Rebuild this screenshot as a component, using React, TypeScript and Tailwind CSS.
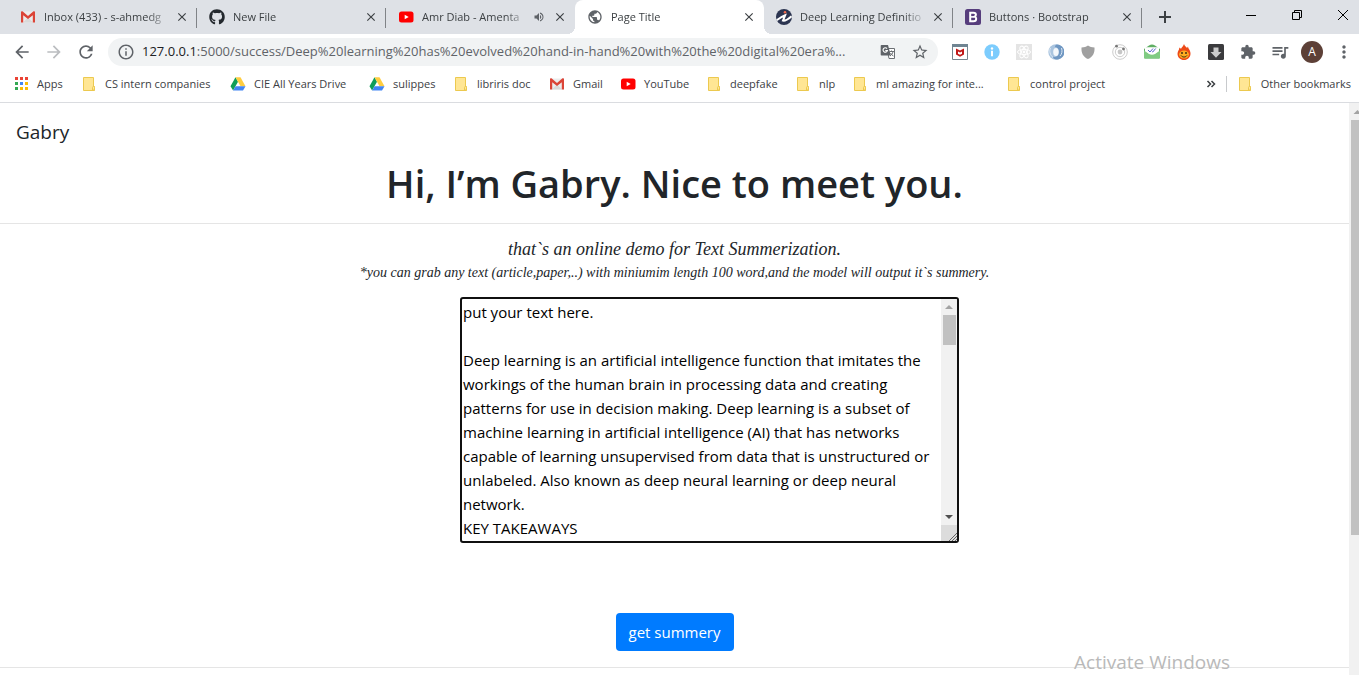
import type { ReactNode } from "react";
import {
  MdArrowBack,
  MdArrowForward,
  MdClose,
  MdExtension,
  MdInfoOutline,
  MdMoreVert,
  MdPublic,
  MdQueueMusic,
  MdRefresh,
  MdStarBorder,
  MdVolumeUp,
} from "react-icons/md";
import { FaGithub } from "react-icons/fa";

function GmailIcon() {
  return (
    <svg viewBox="0 0 16 16" className="size-4 shrink-0" aria-hidden="true">
      <path d="M1.500 2.500h13v11h-13z" fill="#ececec" />
      <path d="M3 13.500l5-5 5 5z" fill="#d9d9d9" />
      <path d="M1 3.200v10.300h2.200V6.200L8 10l4.800-3.800v7.300H15V3.200c0-.8-1-1.200-1.800-.6L8 6.900 2.800 2.600C2 2 1 2.400 1 3.200z" fill="#db4437" />
    </svg>
  );
}

function YouTubeIcon() {
  return (
    <svg viewBox="0 0 16 16" className="size-4 shrink-0" aria-hidden="true">
      <rect x="1" y="2.500" width="14.500" height="11" rx="2.500" fill="#f00" />
      <path d="M6.700 5.700v4.600l4-2.300z" fill="#fff" />
    </svg>
  );
}

function DriveIcon() {
  return (
    <svg viewBox="0 0 16 16" className="size-4 shrink-0" aria-hidden="true">
      <path d="M5.500 1.200L.5 10.200l2.600 4.400L8 5.800z" fill="#0f9d58" />
      <path d="M5.500 1.200h5l5 9h-5z" fill="#ffcd40" />
      <path d="M5.600 10.200h9.900L13 14.600H3.100z" fill="#4285f4" />
    </svg>
  );
}

function FolderIcon() {
  return (
    <svg viewBox="0 0 16 16" className="size-4 shrink-0" aria-hidden="true">
      <path d="M2.500 1.500h10v9h1v4h-11z" fill="#ffe694" stroke="#ecc94f" />
      <path d="M11.500 14v-2.500a1 1 0 0 1 2 0V14z" fill="#ffe694" stroke="#ecc94f" />
    </svg>
  );
}

function AppsIcon() {
  const colors = ["#ea4335", "#ea4335", "#ea4335", "#34a853", "#4285f4", "#fbbc05", "#34a853", "#fbbc05", "#fbbc05"];
  return (
    <svg viewBox="0 0 16 16" className="size-4 shrink-0" aria-hidden="true">
      {colors.map((c, i) => (
        <rect key={i} x={2 + (i % 3) * 5} y={1 + Math.floor(i / 3) * 5} width="3" height="3" fill={c} />
      ))}
    </svg>
  );
}

function InvestopediaIcon() {
  return (
    <svg viewBox="0 0 16 16" className="size-4 shrink-0" aria-hidden="true">
      <circle cx="8" cy="8" r="8" fill="#2c3551" />
      <path
        d="M.8 11.200C4 8.800 6 7.200 9.200 6.200L7 11.600c2 .4 4.500-.8 8.600-4.400"
        fill="none"
        stroke="#fff"
        strokeWidth="2"
      />
      <circle cx="9" cy="3.200" r="1.300" fill="#f26b4e" />
    </svg>
  );
}

function BootstrapIcon() {
  return (
    <svg viewBox="0 0 16 16" className="size-4 shrink-0" aria-hidden="true">
      <rect width="16" height="16" rx="2.500" fill="#563d7c" />
      <path
        d="M5.200 3.800h3.300c1.500 0 2.400.6 2.400 1.900 0 .9-.5 1.500-1.200 1.900.9.300 1.500 1 1.500 2.100 0 1.700-1.200 2.500-2.800 2.500H5.200z"
        fill="none"
        stroke="#fff"
        strokeWidth="2"
      />
      <path d="M5 7.900h4.500" stroke="#fff" strokeWidth="1.600" />
    </svg>
  );
}

function TranslateIcon() {
  return (
    <svg viewBox="0 0 16 16" className="size-4" aria-hidden="true">
      <path d="M7 4.500h7.500v10H9z" fill="#fff" stroke="#6b6f73" />
      <path d="M9.500 7.500h4.500M11.500 6.500v1M13 7.500c-.3 2-1.500 3.500-3 4.500M10.500 9c.7 1.500 2 2.500 3 3" fill="none" stroke="#6b6f73" />
      <path d="M1.500 1H8l2.800 10.500H1.500a.8.800 0 0 1-.8-.8V1.800A.8.800 0 0 1 1.500 1z" fill="#5f6368" />
      <path d="M7 4.600a2.200 2.200 0 1 0 .4 1.900H5.300" fill="none" stroke="#fff" strokeWidth="1.100" />
    </svg>
  );
}

type Tab = { title: string; icon: ReactNode; active?: boolean; audio?: boolean; divider?: boolean };

const tabs: Tab[] = [
  { title: "Inbox (433) - s-ahmedg", icon: <GmailIcon />, divider: true },
  { title: "New File", icon: <FaGithub className="size-4 shrink-0 text-[#24292e]" />, divider: true },
  { title: "Amr Diab - Amenta", icon: <YouTubeIcon />, audio: true },
  { title: "Page Title", icon: <MdPublic className="size-4 shrink-0 text-[#5f6368]" />, active: true },
  { title: "Deep Learning Definitio", icon: <InvestopediaIcon />, divider: true },
  { title: "Buttons · Bootstrap", icon: <BootstrapIcon />, divider: true },
];

function TabItem({ tab }: { tab: Tab }) {
  return (
    <div
      className={
        tab.active
          ? "relative flex h-full min-w-0 flex-[0_1_189px] items-center rounded-t-lg bg-white pr-2 pl-3"
          : "relative flex h-full min-w-0 flex-[0_1_189px] items-center pr-2 pl-3"
      }
    >
      {tab.icon}
      <span className="mr-1 ml-2 min-w-0 flex-1 overflow-hidden whitespace-nowrap text-[#3c4043] [mask-image:linear-gradient(to_right,black_calc(100%-24px),transparent)]">
        {tab.title}
      </span>
      {tab.audio && <MdVolumeUp className="mr-2 size-3 shrink-0 text-[#5f6368]" />}
      <button aria-label={`Close ${tab.title}`} className="shrink-0 text-[#3c4043]">
        <MdClose className="size-3.5" stroke="currentColor" />
      </button>
      {tab.divider && <span className="absolute top-2 right-0 h-5 w-px bg-[#808387]" />}
      {tab.active && (
        <>
          <span className="absolute bottom-0 -left-2 size-2 bg-[radial-gradient(circle_at_0_0,transparent_8px,white_8px)]" />
          <span className="absolute -right-2 bottom-0 size-2 bg-[radial-gradient(circle_at_100%_0,transparent_8px,white_8px)]" />
        </>
      )}
    </div>
  );
}

function TabStrip() {
  return (
    <div className="flex h-[34px] shrink-0 items-center bg-[#dee1e6] pl-2">
      {tabs.map((t) => (
        <TabItem key={t.title} tab={t} />
      ))}
      <button aria-label="New tab" className="ml-4 shrink-0">
        <svg viewBox="0 0 14 14" className="size-3.5" stroke="#3c4043" strokeWidth="2">
          <path d="M7 1v12M1 7h12" />
        </svg>
      </button>
      <div className="ml-auto flex shrink-0 pb-1">
        <button aria-label="Minimize" className="flex w-[46px] justify-center">
          <svg viewBox="0 0 12 12" className="size-3" stroke="#000">
            <path d="M1 6.500h10" />
          </svg>
        </button>
        <button aria-label="Restore" className="flex w-[46px] justify-center">
          <svg viewBox="0 0 12 12" className="size-3" fill="none" stroke="#000">
            <path d="M1.500 3.500h7v7h-7zM3.500 3.500v-2h7v7h-2" />
          </svg>
        </button>
        <button aria-label="Close window" className="flex w-[39px] pl-[17px]">
          <svg viewBox="0 0 12 12" className="size-3" stroke="#000">
            <path d="M1 1l10 10M11 1L1 11" />
          </svg>
        </button>
      </div>
    </div>
  );
}

const extensions: { name: string; icon: ReactNode }[] = [
  {
    name: "WebAdvisor",
    icon: (
      <>
        <path d="M.5.500h15v15H.5z" fill="#fff" stroke="#76858f" />
        <path d="M0 0h16v3H0z" fill="#708592" />
        <path d="M4 4.500l4 2 4-2v6l-4 2.300-4-2.300z" fill="#c01818" />
        <path d="M6 7.500l2 1 2-1v2.200l-2 1-2-1z" fill="#fff" />
      </>
    ),
  },
  {
    name: "Page info",
    icon: (
      <>
        <circle cx="8" cy="8" r="7.700" fill="#7cccfd" />
        <circle cx="8" cy="4.500" r="1.200" fill="#fff" />
        <path d="M8 6.800v5.400" stroke="#fff" strokeWidth="2" />
      </>
    ),
  },
  {
    name: "React tools",
    icon: (
      <>
        <rect width="16" height="16" fill="#e4e4e4" />
        <g fill="none" stroke="#fff">
          <ellipse cx="8" cy="8" rx="6.500" ry="2.600" />
          <ellipse cx="8" cy="8" rx="6.500" ry="2.600" transform="rotate(60 8 8)" />
          <ellipse cx="8" cy="8" rx="6.500" ry="2.600" transform="rotate(120 8 8)" />
        </g>
        <circle cx="8" cy="8" r="1.400" fill="#fff" />
      </>
    ),
  },
  {
    name: "JSON viewer",
    icon: (
      <>
        <circle cx="8" cy="8" r="7.700" fill="#a9c4df" />
        <path d="M9 .4a7.600 7.600 0 0 1 1 15.100c-3 .5-5-1-5-3 3 1.500 5-.5 5.200-4S9.500 3 7 3c0-1.500 1-2.300 2-2.600z" fill="#6f97c2" />
        <ellipse cx="8" cy="8" rx="2.800" ry="4" fill="#f3f7fb" />
        <path d="M2.500 4c-1.500 3-.5 7 2.500 9.500M13.500 4c1 3 .5 6-1.500 8" stroke="#dce8f4" fill="none" />
      </>
    ),
  },
  {
    name: "Shield",
    icon: <path d="M8 1.500c1.500 1.300 4 2 6.500 2 .4 5-1.500 9.500-6.500 11.500C3 13 1.100 8.500 1.500 3.500c2.500 0 5-.7 6.500-2z" fill="#a0a0a0" />,
  },
  {
    name: "Orbit",
    icon: (
      <>
        <circle cx="8" cy="8" r="7.300" fill="#fff" stroke="#ccc" />
        <circle cx="8" cy="8" r="4.700" fill="none" stroke="#ccc" />
        <circle cx="8" cy="8" r="2.400" fill="#c6c6c6" />
        <circle cx="4.500" cy="2.200" r="1.400" fill="#777" />
        <circle cx="11.500" cy="5" r="1.400" fill="#777" />
      </>
    ),
  },
  {
    name: "Mail tracker",
    icon: (
      <>
        <path d="M0 5l5-3.500a5 5 0 0 1 6 0L16 5v8.500a1 1 0 0 1-1 1H1a1 1 0 0 1-1-1z" fill="#5fae63" />
        <path d="M1 3.200h14V8l-7 5-7-5z" fill="#fff" />
        <path d="M0 6.500l5 3.500c2 1 4 1 6 0l5-3.500v7a1 1 0 0 1-1 1H1a1 1 0 0 1-1-1z" fill="#80cb83" />
        <path d="M4 6l2 2 3-3.500M8 7.500l.7.500 3-3.500" stroke="#5a60d0" fill="none" />
      </>
    ),
  },
  {
    name: "Flame",
    icon: (
      <>
        <path d="M8 0c.5 2 2 2.500 3 4l1-1.500c0 2 2.500 3.500 2.500 7 0 4-3 6.500-6.500 6.500s-6.500-2.500-6.500-6.300C1.500 7 3.500 6 3.300 3.500L5 4.800C6 3 7.500 2 8 0z" fill="#ed4a18" />
        <ellipse cx="8" cy="10.500" rx="4.900" ry="4" fill="#ffad22" />
        <path d="M6 8v2M10 8v2" stroke="#3a2610" strokeWidth="1.400" />
        <path d="M5 11.500c1.500 2 4.500 2 6 0" stroke="#3a2610" fill="none" />
      </>
    ),
  },
  {
    name: "Downloader",
    icon: (
      <>
        <rect width="16" height="16" rx="1.500" fill="#3b3b3d" />
        <path d="M5.500 3.500h5V8h3L8 13.800 2.500 8h3z" fill="#ccc" />
      </>
    ),
  },
];

function Toolbar() {
  return (
    <div className="flex h-9 shrink-0 items-center bg-white pl-1.5 text-[#5f6368]">
      <button aria-label="Back" className="flex w-8 justify-center">
        <MdArrowBack className="size-5" />
      </button>
      <button aria-label="Forward" className="flex w-8 justify-center text-[#bbbdc0]">
        <MdArrowForward className="size-5" />
      </button>
      <button aria-label="Reload" className="flex w-8 justify-center">
        <MdRefresh className="size-5" />
      </button>
      <div className="mx-1.5 flex h-7 min-w-0 flex-1 items-center rounded-full bg-[#f1f3f4] px-[9px]">
        <MdInfoOutline className="size-[18px] shrink-0" />
        <div className="ml-[7px] min-w-0 flex-1 overflow-hidden text-[13px] whitespace-nowrap">
          <span className="text-[#202124]">127.0.0.1</span>
          :5000/success/Deep%20learning%20has%20evolved%20hand-in-hand%20with%20the%20digital%20era%...
        </div>
        <button aria-label="Translate this page" className="flex shrink-0">
          <TranslateIcon />
        </button>
        <button aria-label="Bookmark this page" className="ml-[15px] flex shrink-0">
          <MdStarBorder className="size-[18px]" />
        </button>
      </div>
      {extensions.map((e) => (
        <button key={e.name} aria-label={e.name} className="flex w-8 shrink-0 justify-center">
          <svg viewBox="0 0 16 16" className="size-4">
            {e.icon}
          </svg>
        </button>
      ))}
      <button aria-label="Extensions" className="flex w-8 shrink-0 justify-center">
        <MdExtension className="size-4" />
      </button>
      <button aria-label="Media controls" className="flex w-8 shrink-0 justify-center">
        <MdQueueMusic className="size-5" />
      </button>
      <button aria-label="Profile" className="flex w-8 shrink-0 justify-center">
        <span className="flex size-[22px] items-center justify-center rounded-full bg-[#5d4037] text-[12px] text-white">A</span>
      </button>
      <button aria-label="Menu" className="flex w-[31px] shrink-0 justify-center">
        <MdMoreVert className="size-5" />
      </button>
    </div>
  );
}

const bookmarks: { label: string; icon: ReactNode; width: string }[] = [
  { label: "Apps", icon: <AppsIcon />, width: "w-[68px]" },
  { label: "CS intern companies", icon: <FolderIcon />, width: "w-[149px]" },
  { label: "CIE All Years Drive", icon: <DriveIcon />, width: "w-[139px]" },
  { label: "sulippes", icon: <DriveIcon />, width: "w-[84px]" },
  { label: "libriris doc", icon: <FolderIcon />, width: "w-[96px]" },
  { label: "Gmail", icon: <GmailIcon />, width: "w-[71px]" },
  { label: "YouTube", icon: <YouTubeIcon />, width: "w-[86px]" },
  { label: "deepfake", icon: <FolderIcon />, width: "w-[89px]" },
  { label: "nlp", icon: <FolderIcon />, width: "w-[57px]" },
  { label: "ml amazing for inte...", icon: <FolderIcon />, width: "w-[154px]" },
  { label: "control project", icon: <FolderIcon />, width: "w-[120px]" },
];

function BookmarksBar() {
  return (
    <div className="flex h-[33px] shrink-0 items-center border-b border-[#dadce0] bg-white pr-2 pb-1 pl-[13px] whitespace-nowrap text-[#3c4043]">
      <nav className="flex min-w-0 flex-1 overflow-hidden" aria-label="Bookmarks">
        {bookmarks.map((b) => (
          <a key={b.label} href="#" className={`flex shrink-0 items-center gap-2 ${b.width}`}>
            {b.icon}
            {b.label}
          </a>
        ))}
      </nav>
      <button aria-label="More bookmarks" className="mr-2.5">
        <svg viewBox="0 0 10 10" className="size-2.5" fill="none" stroke="#3c4043" strokeWidth="1.500">
          <path d="M1.500 2l3 3-3 3M5.500 2l3 3-3 3" />
        </svg>
      </button>
      <span className="mr-2.5 h-4 w-px bg-[#c8cacd]" />
      <a href="#" className="flex items-center gap-2">
        <FolderIcon />
        Other bookmarks
      </a>
    </div>
  );
}

const articleText = `put your text here.

Deep learning is an artificial intelligence function that imitates the workings of the human brain in processing data and creating patterns for use in decision making. Deep learning is a subset of machine learning in artificial intelligence (AI) that has networks capable of learning unsupervised from data that is unstructured or unlabeled. Also known as deep neural learning or deep neural network.
KEY TAKEAWAYS`;

function SummaryForm() {
  return (
    <form className="flex flex-col items-center" onSubmit={(e) => e.preventDefault()}>
      <div className="ml-[70px] flex h-[246px] w-[499px] max-w-full overflow-hidden rounded-[3px] border-2 border-[#101010] bg-white">
        <textarea
          aria-label="Text to summarize"
          defaultValue={articleText}
          className="min-w-0 flex-1 resize-none overflow-hidden py-px pl-px text-[15px] leading-6 text-black outline-none"
        />
        <div className="flex w-4 shrink-0 flex-col items-center bg-[#f1f1f1]" aria-hidden="true">
          <svg viewBox="0 0 16 16" className="size-4 shrink-0">
            <path d="M4 10l4-4 4 4z" fill="#a3a3a3" />
          </svg>
          <span className="h-[30px] w-[13px] bg-[#c1c1c1]" />
          <svg viewBox="0 0 16 16" className="mt-auto size-4 shrink-0">
            <path d="M4 6l4 4 4-4z" fill="#505050" />
          </svg>
          <svg viewBox="0 0 16 16" className="size-4 shrink-0 bg-[#dcdcdc]">
            <path d="M8 16l8-8M11 16l5-5M14 16l2-2" stroke="#666" />
          </svg>
        </div>
      </div>
      <button type="submit" className="mt-[70px] h-[38px] rounded bg-[#007bff] px-[13px] text-[15px] leading-6 text-white">
        get summery
      </button>
    </form>
  );
}

export default function App() {
  return (
    <div className="relative flex h-screen flex-col overflow-hidden bg-white font-['Open_Sans','Segoe_UI',sans-serif] text-[11px]">
      <TabStrip />
      <Toolbar />
      <BookmarksBar />
      <div className="flex min-h-0 flex-1">
        <main className="min-w-0 flex-1 overflow-hidden text-[#212529]">
          <nav className="px-4 pt-3.5">
            <a href="#" className="text-[19px] leading-[30px]">
              Gabry
            </a>
          </nav>
          <h1 className="mt-3 text-center text-[38px] leading-[48px] font-semibold">Hi, I’m Gabry. Nice to meet you.</h1>
          <hr className="mt-4 border-[#e5e5e5]" />
          <div className="mt-[13px] mb-3 text-center font-['Georgia','Liberation_Serif',serif] italic">
            <p className="text-[18px] leading-6">that`s an online demo for Text Summerization.</p>
            <p className="text-[14px] leading-6">
              *you can grab any text (article,paper,..) with miniumim length 100 word,and the model will output it`s summery.
            </p>
          </div>
          <SummaryForm />
          <hr className="mt-4 border-[#e5e5e5]" />
        </main>
        <div className="flex w-2.5 shrink-0 flex-col bg-[#f1f1f1]" aria-hidden="true">
          <svg viewBox="0 0 10 17" className="h-[17px] w-2.5 shrink-0">
            <path d="M4.500 11l4-4 4 4z" fill="#a3a3a3" />
          </svg>
          <span className="ml-0.5 h-[415px] bg-[#c1c1c1]" />
        </div>
      </div>
      <div className="pointer-events-none absolute right-[129px] bottom-0 text-[19px] leading-[26px] text-[#b9b9b9]">Activate Windows</div>
    </div>
  );
}
